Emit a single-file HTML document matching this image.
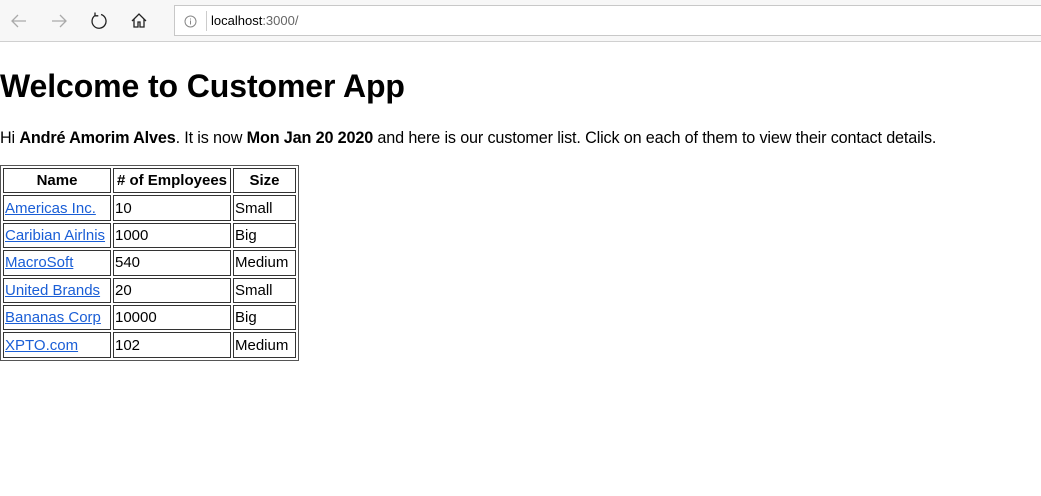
<!DOCTYPE html>
<html><head><style>
html,body{margin:0;padding:0;width:1041px;height:496px;overflow:hidden;background:#fff;font-family:"Liberation Sans",sans-serif}
.bar{position:absolute;left:0;top:0;width:1041px;height:41px;background:#f7f7f7;border-bottom:1px solid #d0d0d0}
.addr{position:absolute;left:174px;top:5px;width:870px;height:31px;background:#fff;border:1px solid #c8c8c8;box-sizing:border-box}
.addr .sep{position:absolute;left:31px;top:5px;width:1px;height:20px;background:#ccc}
.addr .url{position:absolute;left:36px;top:7px;font-size:13px;color:#000}
.addr .url span{color:#666}
.ic{position:absolute;top:11px}
h1{position:absolute;left:0;top:68px;margin:0;font-size:32px;font-weight:bold;letter-spacing:-0.1px}
p{position:absolute;left:0;top:129px;margin:0;font-size:16.2px;white-space:nowrap;letter-spacing:-0.15px}
table{position:absolute;left:0;top:165px;border:1px solid #555;border-spacing:2px;font-size:15px}
td,th{border:1px solid #333;padding:0 1px;height:23.4px;white-space:nowrap}
th{text-align:center}
a{color:#1a5ed6}
</style></head><body>
<div class="bar">
<svg class="ic" style="left:9px" width="20" height="20" viewBox="0 0 20 20"><path d="M17 10H3M9 4L3 10l6 6" stroke="#aaa" stroke-width="1.3" fill="none"/></svg>
<svg class="ic" style="left:49px" width="20" height="20" viewBox="0 0 20 20"><path d="M3 10h14M11 4l6 6-6 6" stroke="#aaa" stroke-width="1.3" fill="none"/></svg>
<svg class="ic" style="left:89px" width="20" height="20" viewBox="0 0 20 20"><path d="M12 3.5A7 7 0 1 1 6 4.5M6 1.5v3.3H9.3" stroke="#222" stroke-width="1.3" fill="none"/></svg>
<svg class="ic" style="left:129px" width="20" height="20" viewBox="0 0 20 20"><path d="M3 10L10 3l7 7M5 8v8h4v-5h2v5h4V8" stroke="#222" stroke-width="1.3" fill="none"/></svg>
<div class="addr"><svg style="position:absolute;left:9px;top:9px" width="13" height="13" viewBox="0 0 13 13"><circle cx="6.5" cy="6.5" r="5.5" stroke="#888" fill="none"/><path d="M6.5 5.5v4M6.5 3.5v1" stroke="#888"/></svg><div class="sep"></div><div class="url">localhost<span>:3000/</span></div></div>
</div>
<h1>Welcome to Customer App</h1>
<p>Hi <b>André Amorim Alves</b>. It is now <b>Mon Jan 20 2020</b> and here is our customer list. Click on each of them to view their contact details.</p>
<table>
<tr><th style="width:104px">Name</th><th style="width:114px"># of Employees</th><th style="width:59px">Size</th></tr>
<tr><td><a href="#">Americas Inc.</a></td><td>10</td><td>Small</td></tr>
<tr><td><a href="#">Caribian Airlnis</a></td><td>1000</td><td>Big</td></tr>
<tr><td><a href="#">MacroSoft</a></td><td>540</td><td>Medium</td></tr>
<tr><td><a href="#">United Brands</a></td><td>20</td><td>Small</td></tr>
<tr><td><a href="#">Bananas Corp</a></td><td>10000</td><td>Big</td></tr>
<tr><td><a href="#">XPTO.com</a></td><td>102</td><td>Medium</td></tr>
</table>
</body></html>
